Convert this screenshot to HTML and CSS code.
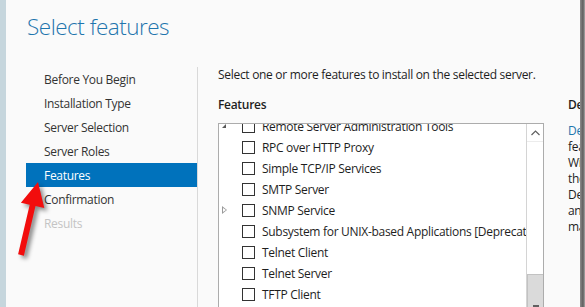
FILE: index.html
```html
<!DOCTYPE html>
<html lang="en">
<head>
    <meta charset="UTF-8">
    <meta name="viewport" content="width=device-width, initial-scale=1.0">
    <title>Add Roles and Features Wizard - Select features</title>
    <link rel="stylesheet" href="styles.css">
</head>
<body>
    <div class="window">
        <div class="strip"></div>
        <div class="main">
            <h1 class="title">Select features</h1>
            <div class="wizard">
                <ul class="nav">
                    <li>Before You Begin</li>
                    <li>Installation Type</li>
                    <li>Server Selection</li>
                    <li>Server Roles</li>
                    <li class="active">Features</li>
                    <li>Confirmation</li>
                    <li class="disabled">Results</li>
                </ul>
                <div class="content">
                    <p class="intro">Select one or more features to install on the selected server.</p>
                    <div class="columns">
                        <div class="features">
                            <h2 class="label">Features</h2>
                            <div class="listbox">
                                <ul class="tree">
                                    <li class="row"><span class="twisty open"></span><span class="check"></span>Remote Server Administration Tools</li>
                                    <li class="row"><span class="twisty"></span><span class="check"></span>RPC over HTTP Proxy</li>
                                    <li class="row"><span class="twisty"></span><span class="check"></span>Simple TCP/IP Services</li>
                                    <li class="row"><span class="twisty"></span><span class="check"></span>SMTP Server</li>
                                    <li class="row"><span class="twisty closed"></span><span class="check"></span>SNMP Service</li>
                                    <li class="row"><span class="twisty"></span><span class="check"></span>Subsystem for UNIX-based Applications [Deprecated]</li>
                                    <li class="row"><span class="twisty"></span><span class="check"></span>Telnet Client</li>
                                    <li class="row"><span class="twisty"></span><span class="check"></span>Telnet Server</li>
                                    <li class="row"><span class="twisty"></span><span class="check"></span>TFTP Client</li>
                                </ul>
                                <div class="scrollbar">
                                    <div class="sb-up">
                                        <svg width="9" height="6" viewBox="0 0 9 6"><path d="M0.5 5 L4.5 1 L8.5 5" fill="none" stroke="#606060" stroke-width="1.2"/></svg>
                                    </div>
                                    <div class="sb-track"></div>
                                    <div class="sb-thumb"><span class="grip"></span></div>
                                </div>
                            </div>
                        </div>
                        <div class="description">
                            <h2 class="label">Description</h2>
                            <div class="desc-text">
                                <span class="link">Desktop Experience</span> includes<br>
                                features of Windows 8.1, including<br>
                                Windows Search. For example, you can<br>
                                then use Windows Search to look up<br>
                                Desktop apps, the Character Map, Media Player<br>
                                and other desktop features without<br>
                                making changes to the server.
                            </div>
                        </div>
                    </div>
                </div>
            </div>
        </div>
        <div class="edge"></div>
        <svg class="arrow" width="60" height="270" viewBox="0 0 60 270">
            <polygon points="38,182 44.3,208.1 35.5,206.1 23.9,255.7 18.1,254.3 29.7,204.7 20.9,202.7" fill="#f20d0d"/>
        </svg>
    </div>
</body>
</html>
```

FILE: styles.css
```css
body {
    margin: 0;
    padding: 0;
    font-family: 'Open Sans', 'Noto Sans', sans-serif;
    font-size: 12px;
    letter-spacing: -0.3px;
    color: #1e1e1e;
    overflow: hidden;
}
.window {
    position: relative;
    display: flex;
    width: 585px;
    height: 307px;
    overflow: hidden;
    background-color: #fafafa;
}
.strip {
    width: 6px;
    flex-shrink: 0;
    background-color: #c6d6dd;
}
.main {
    flex: 1;
    min-width: 0;
    overflow: hidden;
}
.title {
    margin: 0;
    padding: 12px 0 0 21px;
    height: 55px;
    font-size: 22.5px;
    font-weight: 300;
    letter-spacing: -0.5px;
    line-height: 30px;
    color: #1f75ad;
}
.wizard {
    display: flex;
    height: 240px;
}
.nav {
    list-style: none;
    margin: 0;
    padding: 0 0 0 20px;
    width: 171px;
    flex-shrink: 0;
    border-right: 1px solid #d9d9d9;
}
.nav li {
    box-sizing: border-box;
    height: 24px;
    padding: 3px 0 0 18px;
    line-height: 20px;
    color: #333333;
    white-space: nowrap;
}
.nav li.active {
    background-color: #0072bc;
    color: white;
}
.nav li.disabled {
    color: #c4c4c4;
}
.content {
    flex: 1;
    min-width: 0;
    padding-left: 20px;
}
.intro {
    margin: 0;
    padding-top: 1px;
    line-height: 14px;
    white-space: nowrap;
}
.columns {
    display: flex;
    gap: 24px;
    margin-top: 15px;
}
.label {
    margin: 0 0 10px 0;
    font-size: 12px;
    font-weight: 600;
    line-height: 16px;
    white-space: nowrap;
}
.features {
    width: 326px;
    flex-shrink: 0;
}
.listbox {
    display: flex;
    height: 214px;
    border: 1px solid #acacac;
    background-color: white;
}
.tree {
    flex: 1;
    min-width: 0;
    list-style: none;
    margin: 0;
    padding: 0;
    overflow: hidden;
}
.tree .row:first-child {
    margin-top: -8px;
}
.row {
    display: flex;
    align-items: center;
    height: 21px;
    white-space: nowrap;
}
.twisty {
    width: 23px;
    height: 21px;
    flex-shrink: 0;
    position: relative;
}
.twisty.closed::before {
    content: "";
    position: absolute;
    left: 3px;
    top: 6px;
    border-left: 5px solid #9a9a9a;
    border-top: 4px solid transparent;
    border-bottom: 4px solid transparent;
}
.twisty.closed::after {
    content: "";
    position: absolute;
    left: 4px;
    top: 8px;
    border-left: 3px solid white;
    border-top: 2px solid transparent;
    border-bottom: 2px solid transparent;
}
.twisty.open::before {
    content: "";
    position: absolute;
    left: 3px;
    top: 8px;
    border-right: 4px solid #595959;
    border-top: 4px solid transparent;
}
.check {
    width: 11px;
    height: 11px;
    flex-shrink: 0;
    border: 1px solid #333333;
    background-color: white;
    margin-right: 7px;
}
.scrollbar {
    width: 16px;
    flex-shrink: 0;
    display: flex;
    flex-direction: column;
    border-left: 1px solid #d4d4d4;
}
.sb-up {
    height: 17px;
    display: flex;
    align-items: center;
    justify-content: center;
    border-bottom: 1px solid #ececec;
}
.sb-track {
    flex: 1;
}
.sb-thumb {
    height: 62px;
    display: flex;
    align-items: center;
    justify-content: center;
    background-color: #dadada;
    border: 1px solid #c2c2c2;
    border-right: none;
}
.grip {
    width: 6px;
    height: 2px;
    background-color: #606060;
}
.description {
    flex: 1;
    min-width: 0;
}
.desc-text {
    margin-top: 1px;
    line-height: 16px;
    white-space: nowrap;
}
.desc-text .link {
    color: #1f75ad;
}
.edge {
    width: 5px;
    flex-shrink: 0;
    background: linear-gradient(to right, #8c8c8c, #5e5e5e 60%, #a8a8a8);
}
.arrow {
    position: absolute;
    left: 0;
    top: 0;
    filter: drop-shadow(3px 3px 2px rgba(0, 0, 0, 0.45));
}
```
